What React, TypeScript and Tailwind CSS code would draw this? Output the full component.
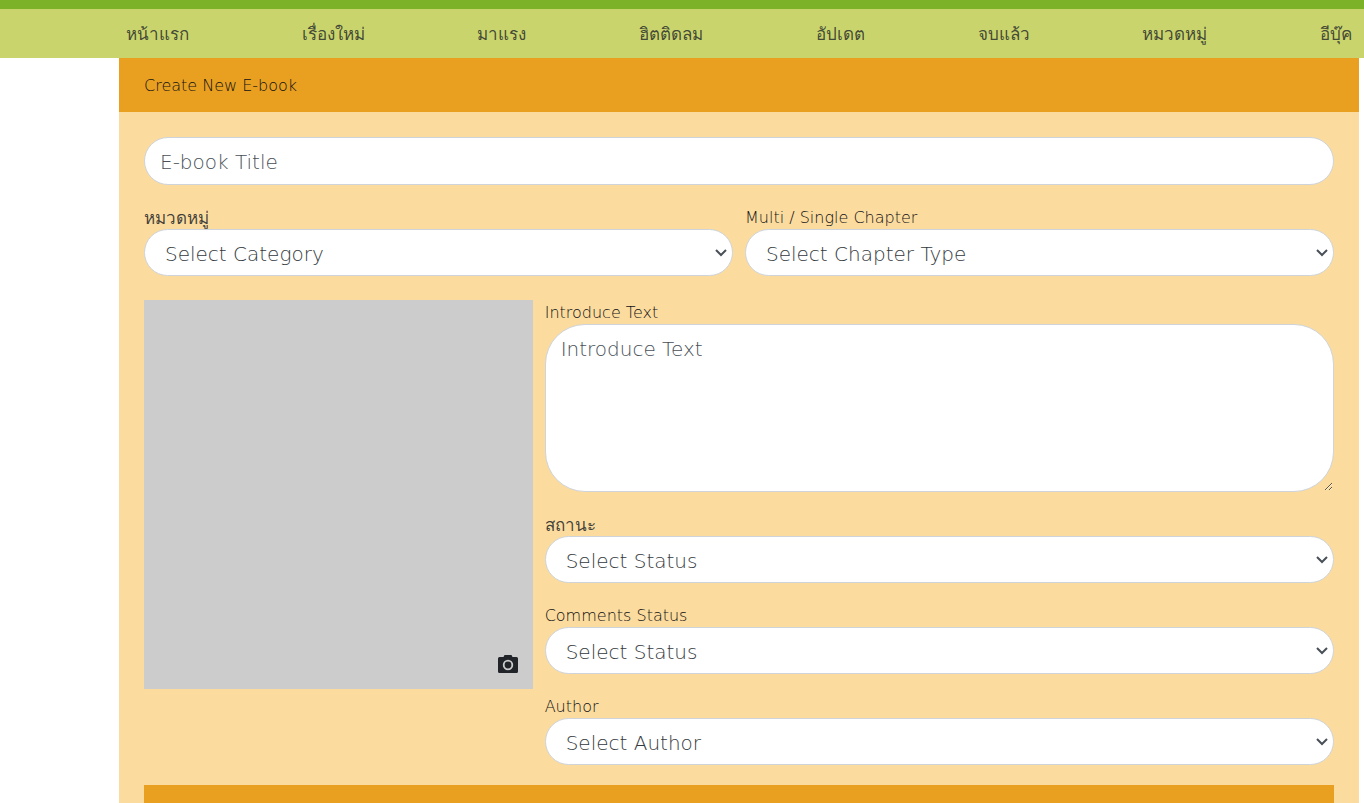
import React from "react";

const navItems = ["หน้าแรก", "เรื่องใหม่", "มาแรง", "ฮิตติดลม", "อัปเดต", "จบแล้ว", "หมวดหมู่", "อีบุ๊ค"];

const controlClass =
  "block w-full border border-[#ced4da] bg-white text-xl text-[#343a40] placeholder:text-[#495057] placeholder:opacity-100";

interface SelectFieldProps {
  id: string;
  label: string;
  placeholder: string;
  lang?: string;
}

function SelectField({ id, label, placeholder, lang = "en" }: SelectFieldProps) {
  return (
    <div>
      <label
        htmlFor={id}
        lang={lang}
        className="block h-6 leading-[26px] whitespace-nowrap [&:lang(th)]:text-[17px] [&:lang(th)]:text-[#212529]/85"
      >
        {label}
      </label>
      <div className="relative">
        <select id={id} className={`${controlClass} h-[47px] appearance-none rounded-full px-5 pt-0.5`}>
          <option>{placeholder}</option>
        </select>
        <svg
          viewBox="0 0 12 8"
          className="pointer-events-none absolute right-1.5 top-5 h-2 w-3"
          fill="none"
          stroke="#495057"
          strokeWidth="2"
        >
          <path d="M1 1l5 5 5-5" />
        </svg>
      </div>
    </div>
  );
}

export default function App() {
  return (
    <div className="min-h-screen flex flex-col bg-white font-['DejaVu_Sans','Noto_Sans',sans-serif] font-extralight text-base text-[#101215]">
      <header className="bg-[#c9d46c] border-t-9 border-[#7cb228]">
        <nav className="flex items-center justify-between h-[49px] pt-0.5 ml-[126px] mr-3">
          {navItems.map((item) => (
            <a key={item} href="#" className="whitespace-nowrap text-[17px] text-[#212529]/80">
              {item}
            </a>
          ))}
        </nav>
      </header>

      <main className="flex-1 flex flex-col ml-[119px] mr-[5px] bg-[#fcdb9e]">
        <h1 className="h-[54px] bg-[#e9a020] px-[25px] leading-[56px]">Create New E-book</h1>

        <form className="flex-1 flex flex-col px-[25px] pt-[25px]">
          <input
            type="text"
            aria-label="E-book Title"
            placeholder="E-book Title"
            className={`${controlClass} h-12 rounded-full px-[15px] pt-0.5`}
          />

          <div className="grid grid-cols-2 gap-3 mt-5">
            <SelectField id="category" label="หมวดหมู่" lang="th" placeholder="Select Category" />
            <SelectField id="chapter" label="Multi / Single Chapter" placeholder="Select Chapter Type" />
          </div>

          <div className="grid grid-cols-12 gap-3 mt-6">
            {/* Cover upload */}
            <div className="col-span-4">
              <div className="flex items-end justify-end aspect-square bg-[#ccc] p-[13px]">
                <button type="button" aria-label="Upload cover" className="cursor-pointer">
                  <svg viewBox="0 0 24 24" className="size-6" fill="#212529">
                    <path
                      fillRule="evenodd"
                      d="M8.500 3 7.500 5H3.500A1.500 1.500 0 0 0 2 6.500v13A1.500 1.500 0 0 0 3.500 21h17a1.500 1.500 0 0 0 1.500-1.500v-13A1.500 1.500 0 0 0 20.500 5h-4l-1-2h-7ZM12 18.200a5.200 5.200 0 1 1 0-10.400 5.200 5.200 0 0 1 0 10.400Z"
                    />
                    <circle cx="12" cy="13" r="3.400" />
                  </svg>
                </button>
              </div>
            </div>

            {/* Details */}
            <div className="col-span-8 flex flex-col gap-5">
              <div>
                <label htmlFor="intro" className="block h-6 leading-[26px]">
                  Introduce Text
                </label>
                <textarea
                  id="intro"
                  placeholder="Introduce Text"
                  className={`${controlClass} h-[168px] rounded-[40px] px-[15px] py-2.5 resize`}
                />
              </div>
              <SelectField id="status" label="สถานะ" lang="th" placeholder="Select Status" />
              <SelectField id="comments" label="Comments Status" placeholder="Select Status" />
              <SelectField id="author" label="Author" placeholder="Select Author" />
            </div>
          </div>

          <div className="flex-1 min-h-4 mt-5 bg-[#e9a020]" />
        </form>
      </main>
    </div>
  );
}
